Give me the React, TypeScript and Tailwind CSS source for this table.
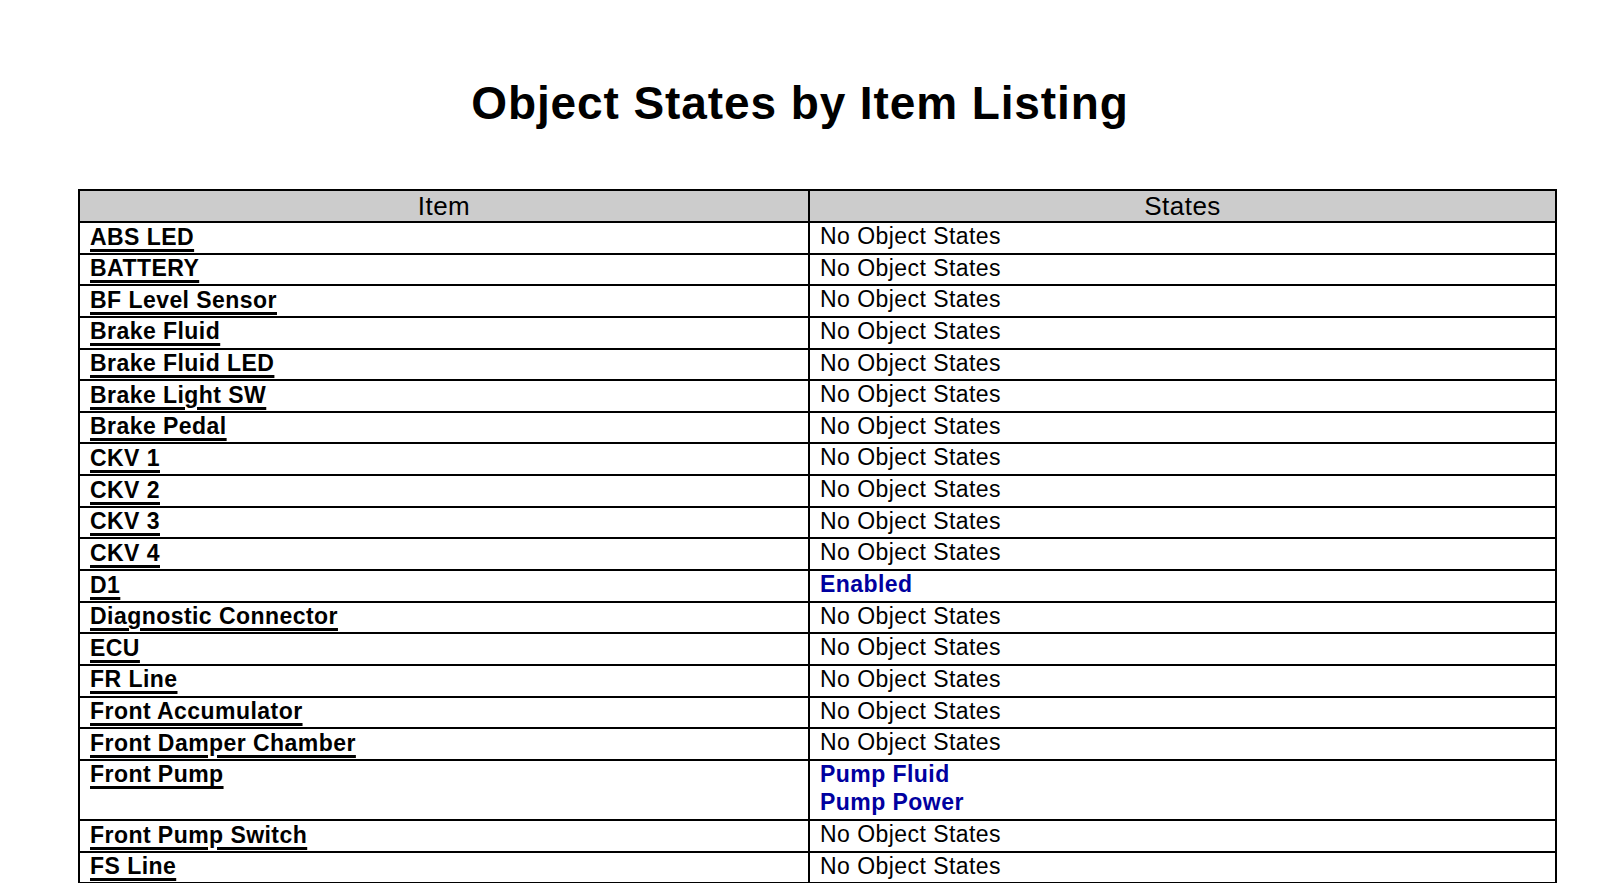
import React from 'react';

type Row = {
  item: string;
  states?: string[];
};

const ROWS: Row[] = [
  { item: 'ABS LED' },
  { item: 'BATTERY' },
  { item: 'BF Level Sensor' },
  { item: 'Brake Fluid' },
  { item: 'Brake Fluid LED' },
  { item: 'Brake Light SW' },
  { item: 'Brake Pedal' },
  { item: 'CKV 1' },
  { item: 'CKV 2' },
  { item: 'CKV 3' },
  { item: 'CKV 4' },
  { item: 'D1', states: ['Enabled'] },
  { item: 'Diagnostic Connector' },
  { item: 'ECU' },
  { item: 'FR Line' },
  { item: 'Front Accumulator' },
  { item: 'Front Damper Chamber' },
  { item: 'Front Pump', states: ['Pump Fluid', 'Pump Power'] },
  { item: 'Front Pump Switch' },
  { item: 'FS Line' },
];

const StateRow: React.FC<{ row: Row }> = ({ row }) => (
  <div className="flex border-b-2 border-black">
    <div className="w-[730px] shrink-0 border-r-2 border-black pl-[10px] pt-[1.5px] pb-[3.15px] text-[23px] leading-[25px]">
      <span className="font-bold tracking-[0.45px] underline decoration-[3px] underline-offset-[4px]">{row.item}</span>
    </div>
    <div className="flex-1 pl-[10px] pt-[1px] pb-[3.65px] flex flex-col gap-[3.5px] text-[23px] leading-[25px]">
      {row.states ? (
        row.states.map(s => (
          <div key={s} className="font-bold tracking-[0.45px] text-[#0000a0]">
            {s}
          </div>
        ))
      ) : (
        <div className="tracking-[0.45px]">No Object States</div>
      )}
    </div>
  </div>
);

export default function App() {
  return (
    <div
      className="min-h-screen bg-white text-black overflow-hidden"
      style={{ fontFamily: '"Liberation Sans", Arial, sans-serif' }}
    >
      <div className="w-[1600px] pt-[80px] text-center">
        <h1 className="text-[46px] leading-[46px] font-bold tracking-[0.9px]">Object States by Item Listing</h1>
      </div>

      <div className="ml-[78px] mt-[63px] w-[1479px] border-x-2 border-t-2 border-black">
        <div className="flex border-b-2 border-black bg-[#cccccc] h-[32px]">
          <div className="w-[730px] shrink-0 border-r-2 border-black text-center text-[26px] leading-[30px] tracking-[0.5px]">
            Item
          </div>
          <div className="flex-1 text-center text-[26px] leading-[30px] tracking-[0.5px]">States</div>
        </div>
        {ROWS.map(row => (
          <StateRow key={row.item} row={row} />
        ))}
      </div>
    </div>
  );
}
